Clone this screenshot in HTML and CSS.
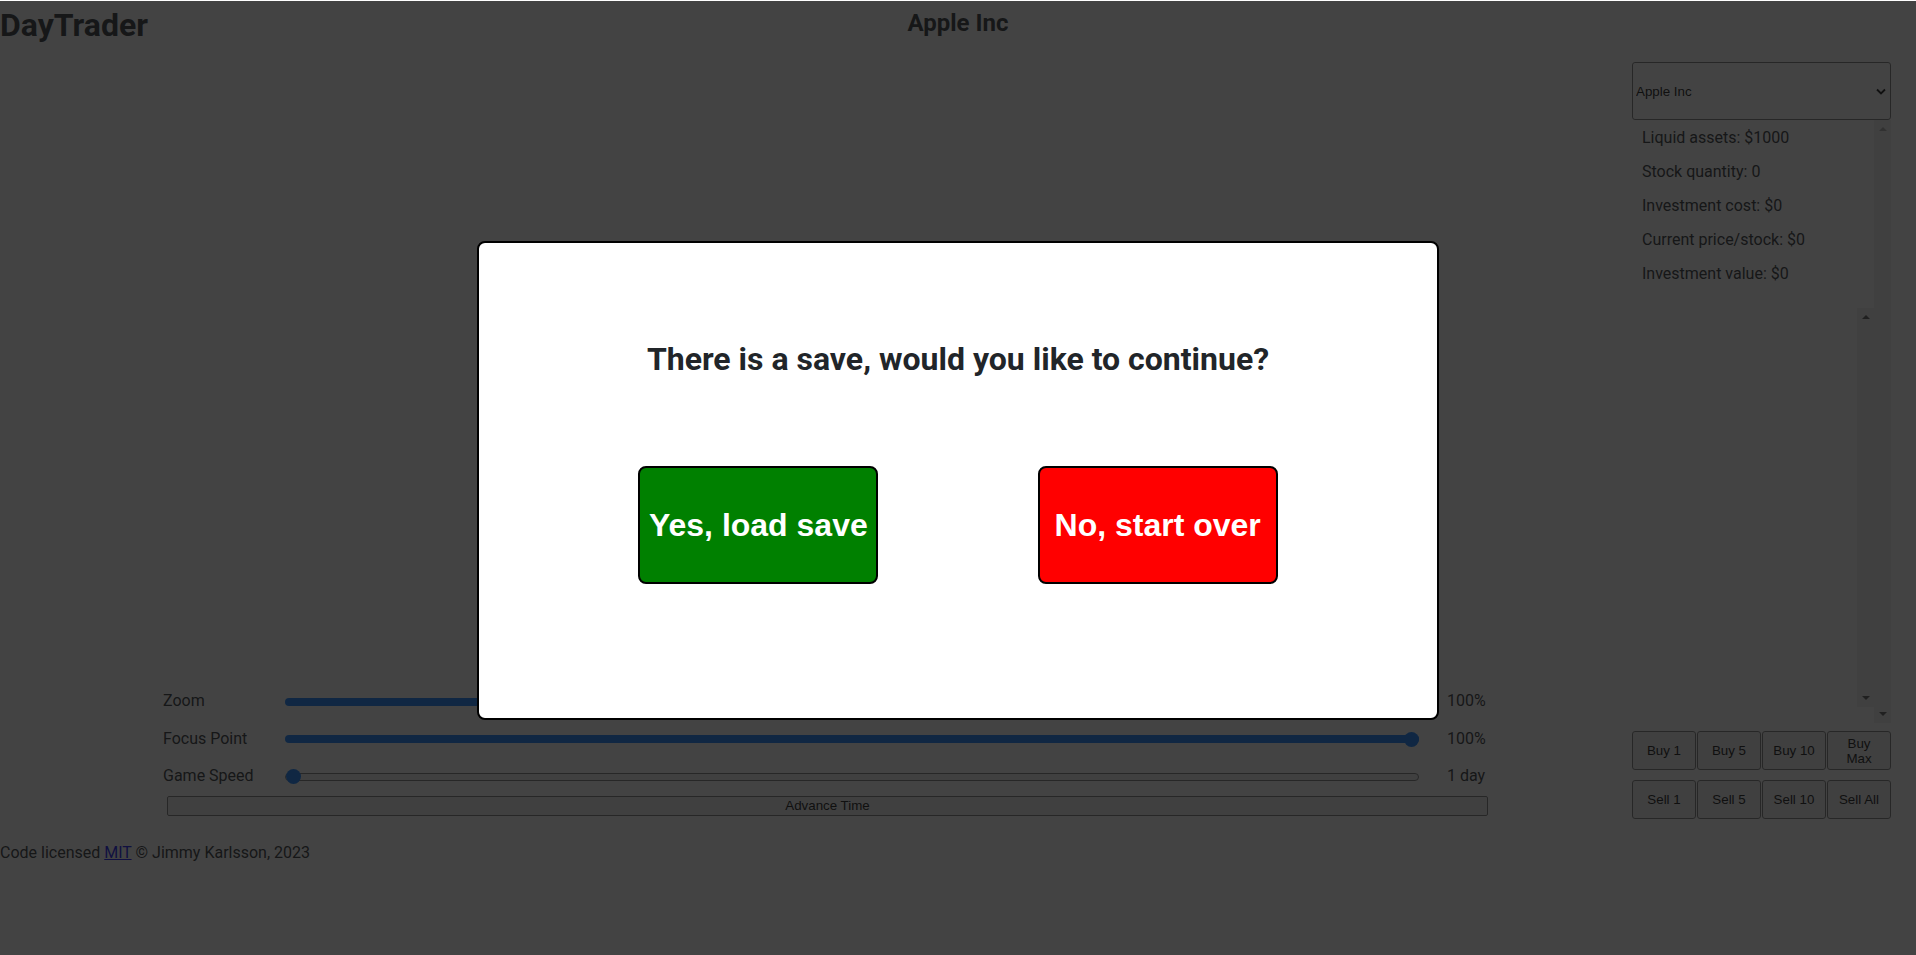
FILE: index.html
```html
<!DOCTYPE html>
<html lang="en">
<head>
<meta charset="utf-8">
<title>DayTrader</title>
<link rel="stylesheet" href="styles.css">
</head>
<body>
<header class="topbar">
  <h1 class="brand">DayTrader</h1>
  <h2 class="stock-title">Apple Inc</h2>
  <div class="topbar-spacer"></div>
</header>

<main class="layout">
  <section class="chart-col">
    <div class="chart"></div>
    <div class="controls">
      <label class="ctl-label" for="zoom">Zoom</label>
      <input id="zoom" class="range full" type="range" min="1" max="100" value="100">
      <span class="ctl-value">100%</span>

      <label class="ctl-label" for="focus">Focus Point</label>
      <input id="focus" class="range full" type="range" min="0" max="100" value="100">
      <span class="ctl-value">100%</span>

      <label class="ctl-label" for="speed">Game Speed</label>
      <input id="speed" class="range empty" type="range" min="1" max="30" value="1">
      <span class="ctl-value">1 day</span>

      <button class="advance" type="button">Advance Time</button>
    </div>
  </section>

  <aside class="sidebar">
    <div class="select-wrap">
      <select class="stock-select">
        <option>Apple Inc</option>
      </select>
      <svg class="chevron" width="10" height="7" viewBox="0 0 10 7" aria-hidden="true">
        <polyline points="1,1.5 5,5.5 9,1.5" fill="none" stroke="#000" stroke-width="1.8"/>
      </svg>
    </div>

    <div class="panel">
      <div class="panel-content">
        <div class="stats">
          <p>Liquid assets: $1000</p>
          <p>Stock quantity: 0</p>
          <p>Investment cost: $0</p>
          <p>Current price/stock: $0</p>
          <p>Investment value: $0</p>
        </div>
        <div class="inner-box">
          <div class="inner-content"></div>
          <div class="scrollbar">
            <svg class="arrow" width="8" height="5" viewBox="0 0 8 5"><polygon points="0,5 4,1 8,5" fill="#505050"/></svg>
            <svg class="arrow" width="8" height="5" viewBox="0 0 8 5"><polygon points="0,0 8,0 4,4" fill="#505050"/></svg>
          </div>
        </div>
      </div>
      <div class="scrollbar outer">
        <svg class="arrow" width="8" height="5" viewBox="0 0 8 5"><polygon points="0,5 4,1 8,5" fill="#a3a3a3"/></svg>
        <svg class="arrow" width="8" height="5" viewBox="0 0 8 5"><polygon points="0,0 8,0 4,4" fill="#505050"/></svg>
      </div>
    </div>

    <div class="trade-grid">
      <button class="trade-btn" type="button">Buy 1</button>
      <button class="trade-btn" type="button">Buy 5</button>
      <button class="trade-btn" type="button">Buy 10</button>
      <button class="trade-btn" type="button">Buy Max</button>
      <button class="trade-btn" type="button">Sell 1</button>
      <button class="trade-btn" type="button">Sell 5</button>
      <button class="trade-btn" type="button">Sell 10</button>
      <button class="trade-btn" type="button">Sell All</button>
    </div>
  </aside>
</main>

<footer class="footer">Code licensed <a href="#">MIT</a> © Jimmy Karlsson, 2023</footer>

<div class="backdrop">
  <div class="dialog" role="dialog" aria-modal="true">
    <h1 class="dialog-title">There is a save, would you like to continue?</h1>
    <div class="dialog-actions">
      <button class="choice yes" type="button">Yes, load save</button>
      <button class="choice no" type="button">No, start over</button>
    </div>
  </div>
</div>
</body>
</html>
```

FILE: styles.css
```css
* { box-sizing: border-box; }

html, body {
  margin: 0;
  padding: 0;
  background: #ffffff;
}

body {
  font-family: Roboto, "Liberation Sans", Arial, sans-serif;
  font-size: 16px;
  color: #212529;
  width: 1916px;
  height: 955px;
  overflow: hidden;
}

/* ---------- header ---------- */
.topbar {
  display: grid;
  grid-template-columns: 1fr auto 1fr;
  align-items: start;
  height: 62px;
}

.brand {
  margin: 6px 0 0;
  font-size: 32px;
  font-weight: 700;
}

.stock-title {
  margin: 9px 0 0;
  font-size: 24px;
  font-weight: 700;
}

/* ---------- main layout ---------- */
.layout {
  display: flex;
  align-items: stretch;
}

.chart-col {
  flex: 1;
  display: flex;
  flex-direction: column;
  padding-bottom: 3.5px;
}

.chart { flex: 1; }

.controls {
  display: grid;
  grid-template-columns: 122px 1134px auto;
  grid-template-rows: 37.5px 37.5px 37.5px 20px;
  align-items: center;
  margin-left: 163px;
}

.ctl-label,
.ctl-value {
  font-size: 16px;
  line-height: 18.75px;
}

.ctl-value { margin-left: 28px; }

.range {
  -webkit-appearance: none;
  appearance: none;
  width: 1134px;
  height: 15px;
  margin: 0;
  background: transparent;
}

.range::-webkit-slider-runnable-track {
  height: 8px;
  border-radius: 4px;
}

.range.full::-webkit-slider-runnable-track {
  background: #0075ff;
}

.range.empty::-webkit-slider-runnable-track {
  background: #efefef;
  border: 1px solid #767676;
}

.range::-webkit-slider-thumb {
  -webkit-appearance: none;
  appearance: none;
  width: 15px;
  height: 15px;
  border-radius: 50%;
  background: #0075ff;
  border: none;
  margin-top: -3.5px;
}

.range.empty::-webkit-slider-thumb { margin-top: -4.5px; }

.advance {
  grid-column: 1 / -1;
  width: 1321px;
  height: 20px;
  margin-left: 4px;
  padding: 0;
  font-family: "Liberation Sans", Arial, sans-serif;
  font-size: 13.333px;
  color: #000;
  background: #efefef;
  border: 1px solid #767676;
  border-radius: 2px;
}

/* ---------- sidebar ---------- */
.sidebar {
  width: 259px;
  margin-right: 25px;
  display: flex;
  flex-direction: column;
}

.select-wrap {
  position: relative;
  height: 58px;
}

.stock-select {
  -webkit-appearance: none;
  appearance: none;
  width: 259px;
  height: 58px;
  margin: 0;
  padding: 0 0 0 3px;
  font-family: "Liberation Sans", Arial, sans-serif;
  font-size: 13.333px;
  color: #000;
  background: #ffffff;
  border: 1px solid #767676;
  border-radius: 3px;
}

.chevron {
  position: absolute;
  right: 5px;
  top: 26px;
}

.panel {
  display: flex;
  height: 603px;
}

.panel-content {
  flex: 1;
  display: flex;
  flex-direction: column;
}

.stats {
  padding: 9px 0 0 10px;
}

.stats p {
  margin: 0 0 15.25px;
  line-height: 18.75px;
}

.inner-box {
  display: flex;
  margin-top: 9px;
  height: 399px;
}

.inner-content { flex: 1; }

.scrollbar {
  width: 17px;
  background: #f1f1f1;
  display: flex;
  flex-direction: column;
  justify-content: space-between;
  align-items: center;
  padding: 6px 0;
}

.arrow { display: block; }

.trade-grid {
  display: grid;
  grid-template-columns: repeat(4, 64px);
  grid-auto-rows: 39px;
  column-gap: 1px;
  row-gap: 10px;
  margin-top: 8px;
}

.trade-btn {
  margin: 0;
  padding: 0 6px;
  font-family: "Liberation Sans", Arial, sans-serif;
  font-size: 13.333px;
  line-height: 15px;
  color: #000;
  background: #efefef;
  border: 1px solid #767676;
  border-radius: 3px;
}

/* ---------- footer ---------- */
.footer {
  margin-top: 25px;
  line-height: 18.75px;
}

.footer a { color: #0000ee; }

/* ---------- modal ---------- */
.backdrop {
  position: fixed;
  left: 0;
  right: 0;
  top: 1px;
  bottom: 0;
  background: rgba(20, 20, 20, 0.8);
  display: flex;
  justify-content: center;
  align-items: center;
  padding-top: 4px;
}

.dialog {
  width: 962px;
  height: 479px;
  background: #ffffff;
  border: 2px solid #000;
  border-radius: 8px;
  display: flex;
  flex-direction: column;
  padding-top: 98.5px;
}

.dialog-title {
  margin: 0;
  font-size: 32px;
  line-height: 37.5px;
  font-weight: 700;
  text-align: center;
  color: #212529;
}

.dialog-actions {
  display: flex;
  justify-content: space-evenly;
  margin-top: 87.5px;
}

.choice {
  width: 240px;
  height: 118px;
  margin: 0;
  padding: 0;
  font-family: "Liberation Sans", Arial, sans-serif;
  font-size: 32px;
  font-weight: 700;
  color: #ffffff;
  border: 2px solid #000;
  border-radius: 8px;
}

.choice.yes { background: #008000; }
.choice.no { background: #ff0000; }
```
